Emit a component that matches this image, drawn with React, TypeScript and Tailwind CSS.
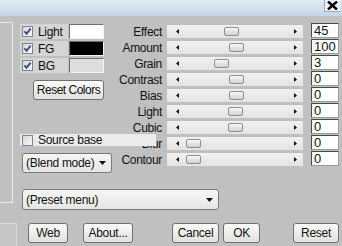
import React from 'react';

const sliders = [
  { label: 'Effect', value: '45', thumb: 57 },
  { label: 'Amount', value: '100', thumb: 62 },
  { label: 'Grain', value: '3', thumb: 47 },
  { label: 'Contrast', value: '0', thumb: 62 },
  { label: 'Bias', value: '0', thumb: 62 },
  { label: 'Light', value: '0', thumb: 61 },
  { label: 'Cubic', value: '0', thumb: 61 },
  { label: 'Blur', value: '0', thumb: 19 },
  { label: 'Contour', value: '0', thumb: 19 },
];

const colors = [
  { label: 'Light', swatch: 'bg-white' },
  { label: 'FG', swatch: 'bg-black' },
  { label: 'BG', swatch: 'bg-[#dedede]' },
];

function Checkbox({ checked }: { checked?: boolean }) {
  return (
    <span className="w-[11px] h-[11px] border border-[#7d8590] bg-gradient-to-br from-[#d6d6d6] to-[#fbfbfb] flex items-center justify-center shrink-0">
      {checked && (
        <svg width="9" height="9" viewBox="0 0 9 9">
          <path d="M1.5 4.3 L3.6 6.8 L7.6 1.6" stroke="#3a4b7e" strokeWidth="1.9" fill="none" />
        </svg>
      )}
    </span>
  );
}

function Button({ label, className }: { label: string; className: string }) {
  return (
    <div
      className={`h-[20px] rounded-[3px] border border-[#707070] bg-gradient-to-b from-[#fbfbfb] to-[#e0e0e0] flex items-center justify-center shrink-0 ${className}`}
    >
      {label}
    </div>
  );
}

function Dropdown({ label, className }: { label: string; className: string }) {
  return (
    <div
      className={`rounded-[3px] border border-[#7a7a7a] bg-gradient-to-b from-[#f6f6f6] to-[#e6e6e6] flex items-center justify-between pl-[3px] pr-[5px] shrink-0 ${className}`}
    >
      <span>{label}</span>
      <svg width="7" height="4" viewBox="0 0 7 4">
        <path d="M0 0 H7 L3.5 4 Z" fill="#111" />
      </svg>
    </div>
  );
}

export default function App() {
  return (
    <div className="w-[342px] h-[246px] bg-[#c0c0c0] flex flex-col overflow-hidden text-[12px] tracking-[-0.3px] text-[#111] font-['Liberation_Sans',Arial,sans-serif] leading-none">
      {/* title strip */}
      <div className="h-[16px] bg-gradient-to-b from-[#e1ebf6] to-[#c5d5e8] flex justify-end pr-[2px] shrink-0">
        <div className="w-[16px] h-[12px] bg-[#eef2f7] border-b border-l border-[#a3a9b0] flex items-center justify-center">
          <svg width="11" height="9" viewBox="0 0 11 9">
            <path d="M1 0.5 L10 8.5 M10 0.5 L1 8.5" stroke="#000" strokeWidth="2.4" />
          </svg>
        </div>
      </div>

      <div className="flex mt-[6px]">
        {/* group box edge */}
        <div className="w-[13px] h-[181px] border-t border-r border-b border-[#ececec] rounded-tr-[2px] shrink-0" />

        <div className="ml-[7px] flex flex-col">
          <div className="flex">
            {/* colors + options */}
            <div className="w-[92px] flex flex-col pt-[2px] shrink-0">
              {colors.map((c) => (
                <div key={c.label} className="flex h-[15px] mb-[2px]">
                  <div className="w-[48px] bg-[#d5d5d5] flex items-center pl-[2px] gap-[5px]">
                    <Checkbox checked />
                    <span>{c.label}</span>
                  </div>
                  <div
                    className={`ml-[1px] w-[35px] h-[15px] border-t border-l border-[#6e6e6e] border-b border-r border-b-[#f2f2f2] border-r-[#f2f2f2] ${c.swatch}`}
                  />
                </div>
              ))}
              <Button label="Reset Colors" className="ml-[13px] mt-[5px] w-[71px] h-[17px] tracking-[-0.5px]" />

              <div className="relative z-10 mt-[34px] w-[136px] h-[12px] bg-[#ebebeb] flex items-center pl-[2px] gap-[5px] shrink-0">
                <Checkbox />
                <span>Source base</span>
              </div>

              <Dropdown label="(Blend mode)" className="ml-[2px] mt-[7px] w-[90px] h-[20px]" />
            </div>

            {/* sliders */}
            <div className="flex flex-col pt-[1px]">
              {sliders.map((s) => (
                <div key={s.label} className="h-[16px] flex items-start">
                  <div className="w-[50px] h-[13px] mt-[2px] flex items-center justify-end">{s.label}</div>
                  <div className="relative ml-[5px] mt-[2px] w-[136px] h-[13px] bg-gradient-to-b from-[#f0f0f0] to-[#e4e4e4] flex items-center justify-between pl-[9px] pr-[6px]">
                    <svg width="3" height="5" viewBox="0 0 3 5">
                      <path d="M3 0 V5 L0 2.5 Z" fill="#111" />
                    </svg>
                    <svg width="3" height="5" viewBox="0 0 3 5">
                      <path d="M0 0 V5 L3 2.5 Z" fill="#111" />
                    </svg>
                    <span
                      className="absolute top-[2px] w-[15px] h-[9px] rounded-[2px] border border-[#8e8e8e] bg-gradient-to-b from-[#f7f7f7] to-[#d2d2d2]"
                      style={{ left: s.thumb }}
                    />
                  </div>
                  <div className="ml-[8px] w-[28px] h-[15px] bg-white border border-[#4a4a4a] border-b-[#9a9a9a] border-r-[#9a9a9a] flex items-center pl-[2px] text-[13px] tracking-normal">
                    {s.value}
                  </div>
                </div>
              ))}
            </div>
          </div>

          <Dropdown label="(Preset menu)" className="ml-[2px] mt-[16px] w-[197px] h-[21px]" />
        </div>
      </div>

      {/* bottom buttons */}
      <div className="flex mt-auto h-[23px]">
        <div className="w-[17px] h-[23px] border-t border-r border-[#dadada] bg-[#c6c6c6] shrink-0" />
        <Button label="Web" className="ml-[11px] w-[40px]" />
        <Button label="About..." className="ml-[15px] w-[50px]" />
        <Button label="Cancel" className="ml-[39px] w-[47px]" />
        <Button label="OK" className="ml-[4px] w-[37px]" />
        <Button label="Reset" className="ml-[33px] w-[46px]" />
      </div>
    </div>
  );
}
